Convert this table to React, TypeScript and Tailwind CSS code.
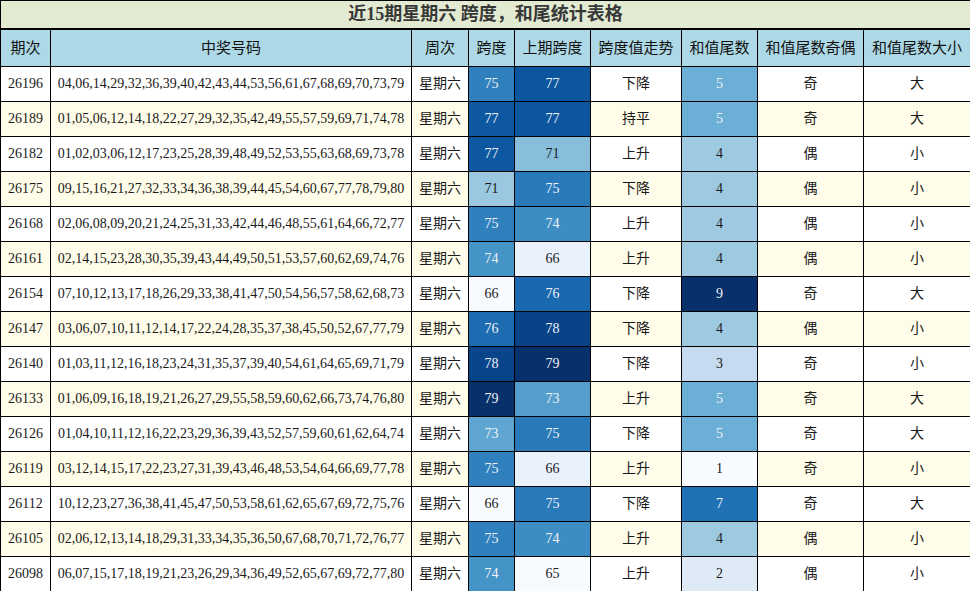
const rows: [string, string, number, number, string, number, string, string][] = [
  ["26196", "04,06,14,29,32,36,39,40,42,43,44,53,56,61,67,68,69,70,73,79", 75, 77, "下降", 5, "奇", "大"],
  ["26189", "01,05,06,12,14,18,22,27,29,32,35,42,49,55,57,59,69,71,74,78", 77, 77, "持平", 5, "奇", "大"],
  ["26182", "01,02,03,06,12,17,23,25,28,39,48,49,52,53,55,63,68,69,73,78", 77, 71, "上升", 4, "偶", "小"],
  ["26175", "09,15,16,21,27,32,33,34,36,38,39,44,45,54,60,67,77,78,79,80", 71, 75, "下降", 4, "偶", "小"],
  ["26168", "02,06,08,09,20,21,24,25,31,33,42,44,46,48,55,61,64,66,72,77", 75, 74, "上升", 4, "偶", "小"],
  ["26161", "02,14,15,23,28,30,35,39,43,44,49,50,51,53,57,60,62,69,74,76", 74, 66, "上升", 4, "偶", "小"],
  ["26154", "07,10,12,13,17,18,26,29,33,38,41,47,50,54,56,57,58,62,68,73", 66, 76, "下降", 9, "奇", "大"],
  ["26147", "03,06,07,10,11,12,14,17,22,24,28,35,37,38,45,50,52,67,77,79", 76, 78, "下降", 4, "偶", "小"],
  ["26140", "01,03,11,12,16,18,23,24,31,35,37,39,40,54,61,64,65,69,71,79", 78, 79, "下降", 3, "奇", "小"],
  ["26133", "01,06,09,16,18,19,21,26,27,29,55,58,59,60,62,66,73,74,76,80", 79, 73, "上升", 5, "奇", "大"],
  ["26126", "01,04,10,11,12,16,22,23,29,36,39,43,52,57,59,60,61,62,64,74", 73, 75, "下降", 5, "奇", "大"],
  ["26119", "03,12,14,15,17,22,23,27,31,39,43,46,48,53,54,64,66,69,77,78", 75, 66, "上升", 1, "奇", "小"],
  ["26112", "10,12,23,27,36,38,41,45,47,50,53,58,61,62,65,67,69,72,75,76", 66, 75, "下降", 7, "奇", "大"],
  ["26105", "02,06,12,13,14,18,29,31,33,34,35,36,50,67,68,70,71,72,76,77", 75, 74, "上升", 4, "偶", "小"],
  ["26098", "06,07,15,17,18,19,21,23,26,29,34,36,49,52,65,67,69,72,77,80", 74, 65, "上升", 2, "偶", "小"],
];

// matplotlib "Blues"
const blues = ["#f7fbff", "#deebf7", "#c6dbef", "#9ecae1", "#6baed6", "#4292c6", "#2171b5", "#08519c", "#08306b"];

function hex(c: string) {
  return [1, 3, 5].map((i) => parseInt(c.slice(i, i + 2), 16));
}

function heat(v: number, min: number, max: number) {
  const t = (v - min) / (max - min);
  const p = t * (blues.length - 1);
  const i = Math.min(Math.floor(p), blues.length - 2);
  const f = p - i;
  const a = hex(blues[i]);
  const b = hex(blues[i + 1]);
  const rgb = a.map((x, k) => Math.round(x + (b[k] - x) * f));
  return {
    backgroundColor: `rgb(${rgb.join(",")})`,
    color: t > 0.48 ? "#eef2f7" : "#1a1a1a",
  };
}

const range = (xs: number[]) => [Math.min(...xs), Math.max(...xs)] as const;
const [spanMin, spanMax] = range(rows.map((r) => r[2]));
const [prevMin, prevMax] = range(rows.map((r) => r[3]));
const [tailMin, tailMax] = range(rows.map((r) => r[5]));

const headers = ["期次", "中奖号码", "周次", "跨度", "上期跨度", "跨度值走势", "和值尾数", "和值尾数奇偶", "和值尾数大小"];
const widths = ["w-[50px]", "w-[361px]", "w-[57px]", "w-[46px]", "w-[76px]", "w-[91px]", "w-[76px]", "w-[106px]", "w-[107px]"];

export default function App() {
  return (
    <div className="w-[970px] h-[591px] bg-white overflow-hidden font-['Liberation_Serif','Noto_Sans_CJK_SC',serif]">
      <table className="w-[970px] table-fixed border-collapse border border-black text-[14px] text-[#1a1a1a]">
        <colgroup>
          {widths.map((w, i) => (
            <col key={i} className={w} />
          ))}
        </colgroup>
        <thead>
          <tr className="h-[28px] bg-[#e2ebd1]">
            <th colSpan={9} className="border-b-2 border-black text-center text-[18px] font-bold text-[#383838]">
              近15期星期六 跨度，和尾统计表格
            </th>
          </tr>
          <tr className="h-[37px] bg-[#add8e6]">
            {headers.map((h) => (
              <th key={h} className="border border-black text-center text-[15px] font-normal text-[#111]">
                {h}
              </th>
            ))}
          </tr>
        </thead>
        <tbody>
          {rows.map((r, i) => (
            <tr key={r[0]} className={i % 2 === 0 ? "h-[35px] bg-white" : "h-[35px] bg-[#fffde9]"}>
              <td className="border border-black text-center">{r[0]}</td>
              <td className="border border-black text-center">{r[1]}</td>
              <td className="border border-black text-center">星期六</td>
              <td className="border border-black text-center" style={heat(r[2], spanMin, spanMax)}>
                {r[2]}
              </td>
              <td className="border border-black text-center" style={heat(r[3], prevMin, prevMax)}>
                {r[3]}
              </td>
              <td className="border border-black text-center">{r[4]}</td>
              <td className="border border-black text-center" style={heat(r[5], tailMin, tailMax)}>
                {r[5]}
              </td>
              <td className="border border-black text-center">{r[6]}</td>
              <td className="border border-black text-center">{r[7]}</td>
            </tr>
          ))}
        </tbody>
      </table>
    </div>
  );
}
